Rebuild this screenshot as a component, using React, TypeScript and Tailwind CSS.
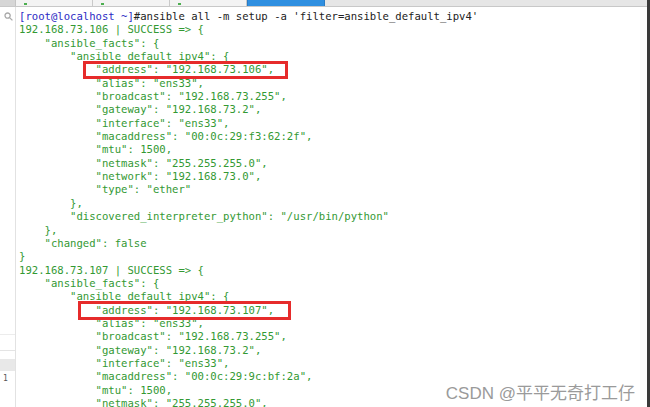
const G = "text-[#339933]";

type Seg = { t: string; c?: string };

const lines: (string | Seg[])[] = [
  [
    { t: "[root@localhost ~]", c: "text-[#2b2bc4]" },
    { t: "#ansible all -m setup -a 'filter=ansible_default_ipv4'", c: "text-[#222]" },
  ],
  "192.168.73.106 | SUCCESS => {",
  '    "ansible_facts": {',
  '        "ansible_default_ipv4": {',
  '            "address": "192.168.73.106",',
  '            "alias": "ens33",',
  '            "broadcast": "192.168.73.255",',
  '            "gateway": "192.168.73.2",',
  '            "interface": "ens33",',
  '            "macaddress": "00:0c:29:f3:62:2f",',
  '            "mtu": 1500,',
  '            "netmask": "255.255.255.0",',
  '            "network": "192.168.73.0",',
  '            "type": "ether"',
  "        },",
  '        "discovered_interpreter_python": "/usr/bin/python"',
  "    },",
  '    "changed": false',
  "}",
  "192.168.73.107 | SUCCESS => {",
  '    "ansible_facts": {',
  '        "ansible_default_ipv4": {',
  '            "address": "192.168.73.107",',
  '            "alias": "ens33",',
  '            "broadcast": "192.168.73.255",',
  '            "gateway": "192.168.73.2",',
  '            "interface": "ens33",',
  '            "macaddress": "00:0c:29:9c:bf:2a",',
  '            "mtu": 1500,',
  '            "netmask": "255.255.255.0",',
];

function Tab({ active }: { active?: boolean }) {
  return (
    <div
      className={
        active
          ? "w-[78px] h-full bg-[#2f8fe0] border-x border-[#2a7cc4]"
          : "w-[77px] h-full bg-[#f3f3f3] border-r border-[#c9c9c9] flex items-end pl-[8px]"
      }
    >
      {!active && <div className="w-[3px] h-[2px] bg-[#4caf50] mb-[1px]" />}
    </div>
  );
}

export default function App() {
  return (
    <div className="w-[650px] h-[407px] bg-white overflow-hidden relative border-r-[3px] border-[#3a3a3a] font-['DejaVu_Sans_Mono',monospace]">
      {/* tab strip */}
      <div className="h-[7px] flex bg-[#e6e6e6] border-b border-[#c8c8c8]">
        <div className="w-[16px] h-full bg-[#d6d6d6] border-r border-[#c4c4c4]" />
        <Tab />
        <Tab />
        <Tab />
        <Tab active />
      </div>

      <div className="flex h-[400px]">
        {/* left side panel */}
        <div className="w-[16px] shrink-0 border-r border-[#e2e2e2] flex flex-col">
          <div className="h-[14px] flex items-end justify-center pl-[2px]">
            <svg width="9" height="9" viewBox="0 0 9 9" fill="none" stroke="#a9a9a9" strokeWidth="1.3">
              <circle cx="3.6" cy="3.6" r="2.6" />
              <path d="M5.6 5.6 L8.4 8.4" />
            </svg>
          </div>
          <div className="h-[314px] border-b border-[#ececec]" />
          <div className="h-[16px] border-b border-[#e4e4e4]" />
          <div className="h-[8px]" />
          <div className="h-[12px] bg-[#e8e8e8]" />
          <div className="pl-[3px] pt-[4px] text-[8px] leading-none text-[#555]">1</div>
        </div>

        {/* terminal output */}
        <div className="relative pl-[3px] pt-[3px] text-[10.6px] leading-[13.35px] whitespace-pre">
          {lines.map((l, i) =>
            typeof l === "string" ? (
              <div key={i} className={G}>
                {l}
              </div>
            ) : (
              <div key={i}>
                {l.map((s, j) => (
                  <span key={j} className={s.c}>
                    {s.t}
                  </span>
                ))}
              </div>
            )
          )}
          {/* red highlight boxes */}
          <div className="absolute left-[67px] top-[54px] w-[205px] h-[18px] border-[3px] border-[#e62b2b]" />
          <div className="absolute left-[62px] top-[294px] w-[213px] h-[19px] border-[3px] border-[#e62b2b]" />
        </div>
      </div>

      {/* watermark */}
      <div className="absolute right-[12px] bottom-[5px] text-[17px] leading-none text-[#9a9a9a] font-['Liberation_Sans','Noto_Sans_CJK_SC',sans-serif]">
        CSDN @平平无奇打工仔
      </div>
    </div>
  );
}
